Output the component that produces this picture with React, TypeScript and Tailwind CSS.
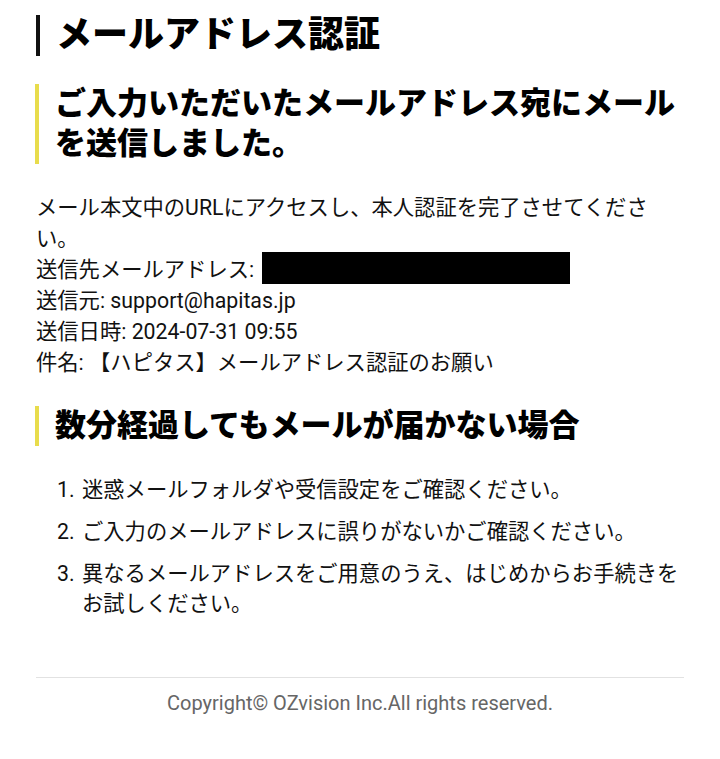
const font = { fontFamily: '"Roboto", "Noto Sans CJK JP", sans-serif' };

function Heading({ children }: { children: React.ReactNode }) {
	return (
		<h2 className="ml-[-1px] border-l-4 border-[#e8dc4c] pl-4 text-[31px] font-black leading-[40px] text-black">
			{children}
		</h2>
	);
}

const steps = [
	"迷惑メールフォルダや受信設定をご確認ください。",
	"ご入力のメールアドレスに誤りがないかご確認ください。",
	"異なるメールアドレスをご用意のうえ、はじめからお手続きをお試しください。",
];

export default function App() {
	return (
		<div className="min-h-[759px] bg-white px-[36px] pt-[15px] pb-[40px] text-[#111]" style={font}>
			<h1 className="border-l-4 border-[#111] pl-4 text-[36px] font-black leading-[41px] text-black">
				メールアドレス認証
			</h1>

			<div className="mt-[28px]">
				<Heading>ご入力いただいたメールアドレス宛にメールを送信しました。</Heading>
			</div>

			<div className="mt-[28px] text-[21.3px] leading-[31px]">
				<p>メール本文中のURLにアクセスし、本人認証を完了させてください。</p>
				<p className="-mt-[2px]">
					送信先メールアドレス:{" "}
					<span className="ml-[3px] inline-block h-[32px] w-[308px] bg-black align-[-7px]" />
				</p>
				<p>送信元: support@hapitas.jp</p>
				<p>送信日時: 2024-07-31 09:55</p>
				<p>件名: 【ハピタス】メールアドレス認証のお願い</p>
			</div>

			<div className="mt-[28px]">
				<Heading>数分経過してもメールが届かない場合</Heading>
			</div>

			<ol className="mt-[29px] flex flex-col gap-[12px] pl-[21px] text-[21.3px] leading-[30px]">
				{steps.map((s, i) => (
					<li key={i} className="flex">
						<span className="w-[25px] shrink-0">{i + 1}.</span>
						<span>{s}</span>
					</li>
				))}
			</ol>

			<footer className="mt-[58px]">
				<hr className="border-t border-[#e2e2e2]" />
				<p className="mt-[11px] text-center text-[20px] leading-[28px] text-[#666]">
					Copyright© OZvision Inc.All rights reserved.
				</p>
			</footer>
		</div>
	);
}
